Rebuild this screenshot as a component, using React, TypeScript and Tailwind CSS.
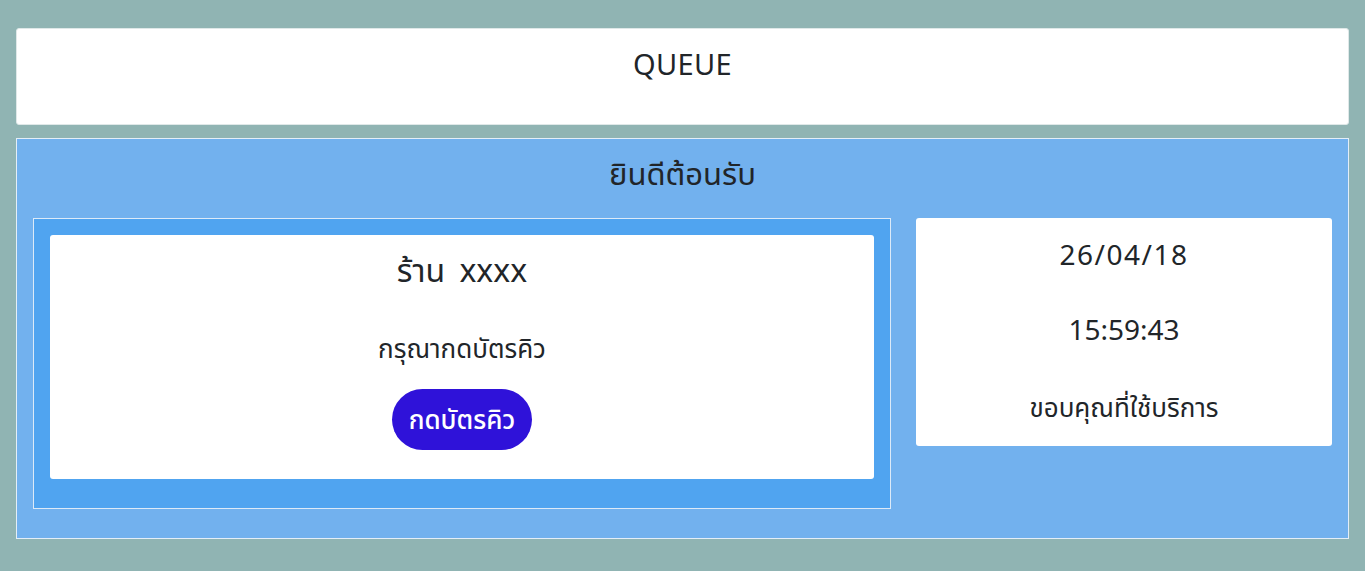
export default function App() {
  return (
    <div
      className="min-h-[571px] bg-[#90b4b3] px-4 pt-7 pb-8 text-[#212529]"
      style={{ fontFamily: '"Noto Sans", "Noto Sans Thai", Inter, sans-serif' }}
    >
      {/* Header */}
      <div className="flex h-[97px] items-start justify-center rounded-[3px] border border-[#dfe8e8] bg-white pt-[17px]">
        <h1 className="text-[29px] leading-[36px] font-normal [word-spacing:0] tracking-[0.3px]">QUEUE</h1>
      </div>

      {/* Welcome panel */}
      <div className="mt-[13px] h-[401px] border border-[#e3eef8] bg-[#72b1ee] px-4 pt-[16px]">
        <h2 className="text-center text-[31px] leading-[36px]">ยินดีต้อนรับ</h2>

        <div className="mt-[27px] flex gap-[25px]">
          {/* Left box */}
          <div className="h-[291px] w-[858px] border border-[#dceaf8] bg-[#50a4f0] p-4">
            <div className="flex h-[244px] flex-col items-center rounded-[3px] bg-white pt-[16px]">
              <div className="text-[32px] leading-[38px] [word-spacing:6px]">ร้าน xxxx</div>
              <div className="mt-[44px] text-[26px] leading-[30px]">กรุณากดบัตรคิว</div>
              <button className="mt-[26px] h-[61px] rounded-full bg-[#2f12d9] px-[17px] text-[26px] font-medium text-white">
                กดบัตรคิว
              </button>
            </div>
          </div>

          {/* Right card */}
          <div className="flex h-[228px] flex-1 flex-col items-center rounded-[3px] bg-white pt-[17px]">
            <div className="text-[28px] leading-[38px] tracking-[1.5px]">26/04/18</div>
            <div className="mt-[37px] text-[28px] leading-[38px]">15:59:43</div>
            <div className="mt-[44px] text-[26px] leading-[30px]">ขอบคุณที่ใช้บริการ</div>
          </div>
        </div>
      </div>
    </div>
  );
}
